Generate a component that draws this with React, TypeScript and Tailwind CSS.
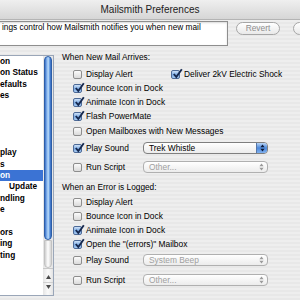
import clsx from "clsx";

const listRows = [
  "on",
  "on Status",
  "efaults",
  "es",
  "",
  "",
  "",
  "",
  "play",
  "s",
  "on",
  "Update",
  "ndling",
  "e",
  "",
  "ors",
  "ing",
  "ting",
  "",
  "",
  "",
];

function Check({ on }: { on?: boolean }) {
  return (
    <span
      className={clsx(
        "relative w-[9px] h-[9px] rounded-[2px] border shrink-0",
        on
          ? "border-[#4d6a97] bg-[linear-gradient(180deg,#cfe2f8,#79a9e3_55%,#a9ccf3)]"
          : "border-[#8d8d8d] bg-[linear-gradient(180deg,#fbfbfb,#dadada)]"
      )}
    >
      {on && (
        <svg className="absolute left-[0px] top-[-3px] w-[11px] h-[11px]" viewBox="0 0 11 11">
          <path d="M1.8 6 L4.3 9 L9.8 1.2" fill="none" stroke="#16294f" strokeWidth="1.9" />
        </svg>
      )}
    </span>
  );
}

function Arrows({ color }: { color: string }) {
  return (
    <svg width="5" height="8" viewBox="0 0 5 8">
      <path d="M2.5 0.5 L4.6 3.2 L0.4 3.2 Z M2.5 7.5 L4.6 4.8 L0.4 4.8 Z" fill={color} />
    </svg>
  );
}

function Popup({ label, on }: { label: string; on?: boolean }) {
  return (
    <div
      className={clsx(
        "w-[125px] h-[12px] rounded-[4px] border flex items-center overflow-hidden bg-[linear-gradient(180deg,#ffffff,#ececec)]",
        on ? "border-[#7f7f7f]" : "border-[#b0b0b0]"
      )}
    >
      <span className={clsx("flex-1 pl-[5px] text-[8.4px] leading-[10px]", on ? "text-black" : "text-[#a0a0a0]")}>
        {label}
      </span>
      <span
        className={clsx(
          "w-[11px] h-full flex items-center justify-center",
          on && "bg-[linear-gradient(180deg,#b9d5f6,#4c88db_50%,#7fb0ee)] border-l border-[#5677a8]"
        )}
      >
        <Arrows color={on ? "#0d1b3a" : "#9a9a9a"} />
      </span>
    </div>
  );
}

function Row({ on, label, className }: { on?: boolean; label: string; className?: string }) {
  return (
    <div className={clsx("h-[12px] flex items-center gap-[4px] ml-[11px]", className)}>
      <Check on={on} />
      <span className="text-[8.4px] leading-[12px] whitespace-nowrap">{label}</span>
    </div>
  );
}

function PopupRow({ on, label, popup, popupOn, className }: { on?: boolean; label: string; popup: string; popupOn?: boolean; className?: string }) {
  return (
    <div className={clsx("h-[14px] flex items-center ml-[11px]", className)}>
      <div className="w-[70px] flex items-center gap-[4px]">
        <Check on={on} />
        <span className="text-[8.4px] leading-[12px] whitespace-nowrap">{label}</span>
      </div>
      <Popup label={popup} on={popupOn} />
    </div>
  );
}

export default function App() {
  return (
    <div className="w-[300px] h-[300px] overflow-hidden font-['Liberation_Sans',Arial,sans-serif] text-black bg-[repeating-linear-gradient(180deg,#eeeeee_0px,#eeeeee_2px,#e8e8e8_2px,#e8e8e8_4px)]">
      {/* title bar */}
      <div className="h-[20px] flex items-center justify-center border-b border-[#b4b4b4] bg-[linear-gradient(180deg,#efefef,#d6d6d6)] text-[10px] text-[#1c1c1c] pb-[1px]">
        Mailsmith Preferences
      </div>

      {/* description + buttons */}
      <div className="flex items-start mt-[1px]">
        <div className="-ml-[10px] w-[238px] h-[25px] shrink-0 border border-[#8e8e8e] bg-white pl-[11px] pt-[0px] text-[8.3px] leading-[11px] whitespace-nowrap overflow-hidden shadow-[inset_0_1px_2px_rgba(0,0,0,0.15)]">
          ings control how Mailsmith notifies you when new mail
        </div>
        <div className="ml-[8px] mt-[1px] w-[44px] h-[13px] shrink-0 rounded-full border border-[#a6a6a6] bg-[linear-gradient(180deg,#ffffff,#e9e9e9)] flex items-center justify-center text-[8.4px] text-[#8e8e8e]">
          Revert
        </div>
        <div className="ml-[13px] mt-[1px] w-[50px] h-[13px] shrink-0 rounded-full border border-[#a6a6a6] bg-[linear-gradient(180deg,#ffffff,#e9e9e9)]" />
      </div>

      {/* main */}
      <div className="flex items-start mt-[5px]">
        {/* list */}
        <div className="mt-[4px] -ml-[2px] w-[56px] h-[241px] shrink-0 border border-[#9aa6b8] bg-white flex">
          <div className="w-[44px] flex flex-col">
            {listRows.map((t, i) => (
              <div
                key={i}
                className={clsx(
                  "h-[11.4px] shrink-0 text-[8.3px] font-bold leading-[11.4px] whitespace-nowrap",
                  i === 11 ? "pl-[10px]" : "pl-[1px]",
                  i === 10 ? "bg-[#3b73d4] text-white" : "text-black"
                )}
              >
                {t}
              </div>
            ))}
          </div>
          {/* scrollbar */}
          <div className="w-[10px] h-full flex flex-col bg-[linear-gradient(90deg,#e4e4e4,#fafafa_50%,#e4e4e4)]">
            <div className="h-[184px] mx-[1px] rounded-full border border-[#2d5ea8] bg-[linear-gradient(90deg,#3a6fc6,#8ebcf1_35%,#b8d8f8_55%,#5d95de_80%,#2f63b8)]" />
            <div className="h-[28px] mx-[1px] rounded-b-full bg-[linear-gradient(90deg,#cfcfcf,#ffffff_50%,#d4d4d4)] border border-[#c2c2c2]" />
            <div className="flex-1 flex flex-col items-center border-t border-[#c8c8c8]">
              <svg className="mt-[6px]" width="5" height="4" viewBox="0 0 5 4">
                <path d="M2.5 0 L5 4 L0 4 Z" fill="#4a4a4a" />
              </svg>
              <div className="w-full border-t border-[#d0d0d0] mt-[3px]" />
              <svg className="mt-[2px]" width="5" height="4" viewBox="0 0 5 4">
                <path d="M0 0 L5 0 L2.5 4 Z" fill="#4a4a4a" />
              </svg>
            </div>
          </div>
        </div>

        {/* settings panel */}
        <div className="ml-[8px] flex flex-col">
          <div className="h-[12px] text-[8.3px] leading-[12px] whitespace-nowrap">When New Mail Arrives:</div>
          <div className="h-[12px] mt-[5px] flex items-center ml-[11px]">
            <div className="w-[98px] flex items-center gap-[4px]">
              <Check />
              <span className="text-[8.4px] leading-[12px]">Display Alert</span>
            </div>
            <Check on />
            <span className="ml-[4px] text-[8.4px] leading-[12px] whitespace-nowrap">Deliver 2kV Electric Shock</span>
          </div>
          <Row on label="Bounce Icon in Dock" className="mt-[2px]" />
          <Row on label="Animate Icon in Dock" className="mt-[2px]" />
          <Row on label="Flash PowerMate" className="mt-[2px]" />
          <Row label="Open Mailboxes with New Messages" className="mt-[3px]" />
          <PopupRow on label="Play Sound" popup="Trek Whistle" popupOn className="mt-[4px]" />
          <PopupRow label="Run Script" popup="Other..." className="mt-[5px]" />

          <div className="h-[12px] mt-[7px] text-[8.3px] leading-[12px] whitespace-nowrap">When an Error is Logged:</div>
          <Row label="Display Alert" className="mt-[3px]" />
          <Row label="Bounce Icon in Dock" className="mt-[2px]" />
          <Row on label="Animate Icon in Dock" className="mt-[2px]" />
          <Row on label={'Open the "(errors)" Mailbox'} className="mt-[2px]" />
          <PopupRow label="Play Sound" popup="System Beep" className="mt-[3px]" />
          <PopupRow label="Run Script" popup="Other..." className="mt-[6px]" />
        </div>
      </div>
    </div>
  );
}
